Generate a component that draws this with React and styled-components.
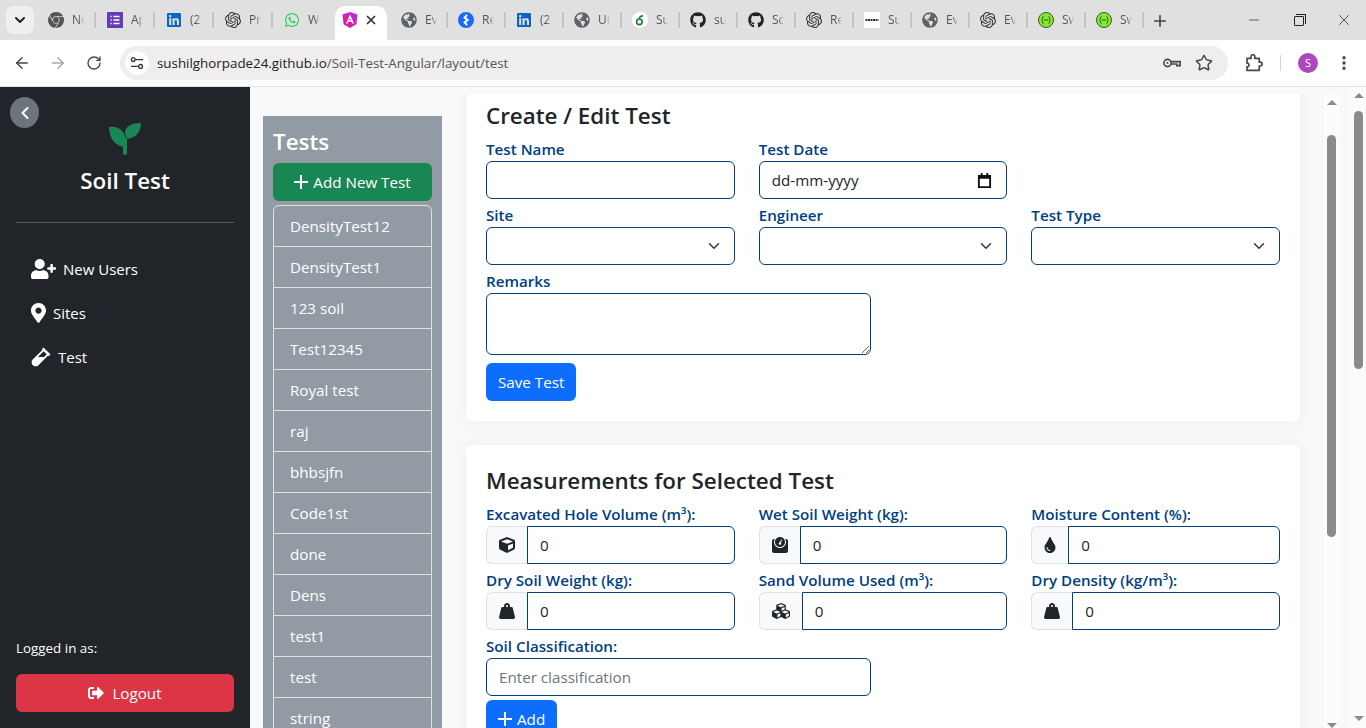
import React from 'react';
import styled, { createGlobalStyle } from 'styled-components';
import {
  FaCube, FaCubes, FaGithub, FaGlobeAmericas, FaLinkedin, FaMapMarkerAlt,
  FaSignOutAlt, FaTint, FaUserPlus, FaVial, FaWeight, FaWeightHanging, FaWhatsapp,
} from 'react-icons/fa';
import { SiOpenai, SiGooglechrome } from 'react-icons/si';
import { ArrowLeft, ArrowRight, RotateCw, Star, EllipsisVertical, ChevronDown, ChevronLeft, X, Plus, Minus } from 'lucide-react';

const font = '"Open Sans", "Noto Sans", sans-serif';
const label = '#004080';

const GlobalStyle = createGlobalStyle`
  html, body { margin: 0; height: 100%; overflow: hidden; }
  body { font-family: ${font}; font-size: 15.2px; line-height: 24px; color: #212529; background: #fff; }
  * { box-sizing: border-box; }
`;

const Browser = styled.div`
  display: flex;
  flex-direction: column;
  height: 728px;
  overflow: hidden;
`;

const TabStrip = styled.div`
  display: flex;
  align-items: flex-end;
  height: 40px;
  background: #e0e0e0;
  flex: none;
`;

const TabMenu = styled.div`
  width: 28px;
  height: 28px;
  margin: 0 4px 6px 6px;
  border-radius: 8px;
  background: #efefef;
  display: flex;
  align-items: center;
  justify-content: center;
  color: #222;
`;

const Tab = styled.div`
  width: ${(p) => p.$width || 58}px;
  height: 34px;
  padding: 0 0 6px ${(p) => p.$pad || 10}px;
  display: flex;
  align-items: center;
  gap: 8px;
  font-size: 12px;
  color: #555;
  position: relative;
  flex: none;
  &::after {
    content: '';
    display: ${(p) => (p.$noSep ? 'none' : 'block')};
    position: absolute;
    right: 0;
    top: 6px;
    width: 2px;
    height: 16px;
    background: #c4c4c4;
  }
`;

const TabName = styled.span`
  width: 12px;
  overflow: hidden;
  white-space: nowrap;
  -webkit-mask-image: linear-gradient(90deg, #000 55%, transparent);
  mask-image: linear-gradient(90deg, #000 55%, transparent);
`;

const ActiveTab = styled.div`
  width: 52px;
  height: 34px;
  background: #fff;
  border-radius: 10px 10px 0 0;
  display: flex;
  align-items: center;
  padding: 0 9px 6px 7px;
  justify-content: space-between;
  flex: none;
`;

const NewTab = styled.div`
  margin: 0 0 10px 7px;
  display: flex;
  color: #444;
`;

const WindowControls = styled.div`
  margin-left: auto;
  display: flex;
  align-self: stretch;
  align-items: center;
  color: #222;
`;

const WinButton = styled.div`
  width: 45px;
  display: flex;
  justify-content: center;
`;

const RestoreIcon = styled.div`
  width: 10px;
  height: 10px;
  border: 1px solid #222;
  border-radius: 1px;
  position: relative;
  margin-top: 2px;
  &::before {
    content: '';
    position: absolute;
    left: 1px;
    top: -3px;
    width: 9px;
    height: 9px;
    border-top: 1px solid #222;
    border-right: 1px solid #222;
  }
`;

const Toolbar = styled.div`
  height: 47px;
  flex: none;
  background: #fff;
  border-radius: 8px 8px 0 0;
  border-bottom: 1px solid #dfe3e3;
  display: flex;
  align-items: center;
  padding-left: 4px;
`;

const ToolIcon = styled.div`
  width: 36px;
  margin-left: ${(p) => p.$left || 0}px;
  display: flex;
  justify-content: center;
  color: ${(p) => (p.$dim ? '#a8a8a8' : '#474747')};
`;

const Omnibox = styled.div`
  flex: none;
  width: 1108px;
  height: 34px;
  margin-left: 8px;
  background: #efedee;
  border-radius: 17px;
  display: flex;
  align-items: center;
  padding: 0 15px 0 5px;
  font-size: 13.36px;
  color: #555;
`;

const TuneBadge = styled.div`
  width: 24px;
  height: 24px;
  border-radius: 50%;
  background: #fff;
  display: flex;
  align-items: center;
  justify-content: center;
  color: #333;
  margin-right: 8px;
`;

const Host = styled.span`
  color: #222;
`;

const OmniEnd = styled.div`
  margin-left: auto;
  display: flex;
  align-items: center;
  gap: 14px;
  color: #474747;
`;

const Separator = styled.div`
  width: 1px;
  height: 16px;
  background: #d5d5d5;
  margin: 0 8px;
`;

const Avatar = styled.div`
  width: 20px;
  height: 20px;
  border-radius: 50%;
  background: #ad47bc;
  color: #fff;
  font-size: 11px;
  display: flex;
  align-items: center;
  justify-content: center;
  margin: 0 8px 0 9px;
`;

const Page = styled.div`
  flex: 1;
  min-height: 0;
  display: flex;
  background: #f8f9fa;
`;

const Sidebar = styled.aside`
  width: 250px;
  flex: none;
  background: #212529;
  color: #fff;
  padding: 36px 16px 16px;
  display: flex;
  flex-direction: column;
  position: relative;
`;

const BackButton = styled.div`
  position: absolute;
  left: 10px;
  top: 10px;
  width: 29px;
  height: 31px;
  border-radius: 50%;
  background: #6c757d;
  display: flex;
  align-items: center;
  justify-content: center;
`;

const Brand = styled.div`
  display: flex;
  flex-direction: column;
  align-items: center;
  border-bottom: 1px solid #55595e;
  margin-bottom: 26px;
  height: 100px;
`;

const BrandName = styled.h1`
  margin: 11px 0 0;
  font-size: 22.4px;
  font-weight: 600;
  line-height: 29px;
  color: #fff;
`;

const NavList = styled.nav`
  display: flex;
  flex-direction: column;
  gap: 4px;
`;

const NavItem = styled.a`
  display: flex;
  align-items: center;
  gap: 7px;
  padding: 8px 15px;
  height: 40px;
  font-size: 15px;
  color: #fff;
  svg { flex: none; }
`;

const SidebarFoot = styled.div`
  margin-top: auto;
`;

const LoggedIn = styled.div`
  font-size: 13.4px;
  line-height: 21px;
  margin-bottom: 15px;
`;

const Button = styled.button`
  display: inline-flex;
  align-items: center;
  justify-content: center;
  gap: ${(p) => p.$gap || 5}px;
  height: 38px;
  border: 0;
  border-radius: 6px;
  padding: 0 12px;
  font: inherit;
  color: #fff;
  background: ${(p) => p.$bg || '#0d6efd'};
  width: ${(p) => p.$width || 'auto'};
  flex: none;
`;

const TestsColumn = styled.div`
  width: 204px;
  flex: none;
  padding: 29px 12px 0 13px;
`;

const TestsPanel = styled.div`
  height: 100%;
  background: #929aa3;
  padding: 10px 10px 0;
  overflow: hidden;
`;

const PanelTitle = styled.h2`
  margin: 0 0 6px;
  font-size: 22.4px;
  font-weight: 600;
  line-height: 31px;
  color: #fff;
`;

const TestList = styled.ul`
  list-style: none;
  margin: 4px 0 0;
  padding: 0;
  border: 1px solid #dee2e6;
  border-radius: 6px 6px 0 0;
`;

const TestItem = styled.li`
  height: 41px;
  padding: 8px 16px;
  color: #fff;
  & + & { border-top: 1px solid #dee2e6; }
  &:first-child { height: 40px; }
`;

const Scroller = styled.main`
  flex: 1;
  min-width: 0;
  margin-top: 7px;
  padding-left: 12px;
  overflow: hidden;
`;

const Cards = styled.div`
  margin-top: -14px;
  display: flex;
  flex-direction: column;
  gap: 24px;
  padding-right: 24px;
`;

const Card = styled.section`
  background: #fff;
  border-radius: 6px;
  padding: 20px;
  box-shadow: 0 0 16px rgba(0, 0, 0, 0.05);
`;

const CardTitle = styled.h3`
  margin: 0 0 6px;
  font-size: 22.4px;
  font-weight: 600;
  line-height: 31px;
  color: #212529;
`;

const Grid = styled.div`
  display: grid;
  grid-template-columns: repeat(3, 1fr);
  column-gap: 24px;
  row-gap: 4px;
`;

const Field = styled.div`
  grid-column: ${(p) => (p.$half ? '1 / -1' : 'auto')};
  width: ${(p) => (p.$half ? '385px' : 'auto')};
`;

const Label = styled.label`
  display: block;
  height: 24px;
  font-weight: 600;
  color: ${label};
  white-space: nowrap;
`;

const controlStyles = `
  display: block;
  width: 100%;
  height: 38px;
  border: 1px solid ${label};
  border-radius: 6px;
  padding: 6px 12px;
  background-color: #fff;
  font: inherit;
  color: #212529;
  outline: none;
`;

const TextInput = styled.input`
  ${controlStyles}
  &::placeholder { color: #6c757d; opacity: 1; }
`;

const DateBox = styled.div`
  ${controlStyles}
  display: flex;
  align-items: center;
  justify-content: space-between;
  padding-right: 14px;
`;

const Select = styled.select`
  ${controlStyles}
  appearance: none;
  background-image: url("data:image/svg+xml,%3csvg xmlns='http://www.w3.org/2000/svg' viewBox='0 0 16 16'%3e%3cpath fill='none' stroke='%23343a40' stroke-linecap='round' stroke-linejoin='round' stroke-width='2' d='m2 5 6 6 6-6'/%3e%3c/svg%3e");
  background-repeat: no-repeat;
  background-position: right 12px center;
  background-size: 16px 12px;
`;

const TextArea = styled.textarea`
  ${controlStyles}
  height: 62px;
  resize: vertical;
`;

const InputGroup = styled.div`
  display: flex;
  height: 38px;
`;

const Addon = styled.div`
  width: ${(p) => p.$width}px;
  flex: none;
  background: #f8f9fa;
  border: 1px solid #dee2e6;
  border-right: 0;
  border-radius: 6px 0 0 6px;
  display: flex;
  align-items: center;
  justify-content: center;
  color: #212529;
`;

const GroupInput = styled(TextInput)`
  flex: 1;
  min-width: 0;
  border-radius: 0 6px 6px 0;
`;

const Actions = styled.div`
  margin-top: ${(p) => p.$top}px;
`;

const Track = styled.div`
  width: 15px;
  flex: none;
  margin: ${(p) => p.$top}px ${(p) => p.$right}px ${(p) => p.$bottom}px 0;
  background: ${(p) => p.$bg};
  display: flex;
  flex-direction: column;
  align-items: center;
`;

const Arrow = styled.div`
  width: 0;
  height: 0;
  border-left: 5px solid transparent;
  border-right: 5px solid transparent;
  ${(p) => (p.$down ? 'border-top: 5px solid #8b8b8b;' : 'border-bottom: 5px solid #8b8b8b;')}
  margin: ${(p) => (p.$down ? 'auto 0 7px' : '6px 0 0')};
`;

const Thumb = styled.div`
  width: 9px;
  height: ${(p) => p.$height}px;
  margin-top: ${(p) => p.$top}px;
  border-radius: 5px;
  background: #8b8b8b;
`;

const FormsIcon = () => (
  <svg width="16" height="16" viewBox="0 0 16 16">
    <rect width="16" height="16" rx="1" fill="#673ab7" />
    <path d="M6.5 4.5h6M6.5 8h6M6.5 11.5h6M3.5 4.5h1.2M3.5 8h1.2M3.5 11.5h1.2" stroke="#fff" strokeWidth="1.4" />
  </svg>
);

const BlueIcon = () => (
  <svg width="16" height="16" viewBox="0 0 16 16">
    <circle cx="8" cy="8" r="8" fill="#1f6bf0" />
    <path d="M9 2.8 6.6 5.6 9.6 8 6.6 10.4 9 13.2" fill="none" stroke="#fff" strokeWidth="2" />
  </svg>
);

const SproutIcon = () => (
  <svg width="16" height="16" viewBox="0 0 16 16">
    <circle cx="8" cy="8" r="8" fill="#fff" />
    <circle cx="7.4" cy="9.8" r="2.8" fill="none" stroke="#1a7a3c" strokeWidth="1.6" />
    <path d="M7 6.8C7.6 4.8 9 4 11 3.8" fill="none" stroke="#1a7a3c" strokeWidth="1.6" />
  </svg>
);

const StripeIcon = () => (
  <svg width="16" height="16" viewBox="0 0 16 16">
    <rect width="16" height="16" fill="#fff" />
    <path d="M1.5 8h13" stroke="#333" strokeWidth="2" strokeDasharray="2 .5" />
  </svg>
);

const AngularIcon = () => (
  <svg width="16" height="16" viewBox="0 0 16 16">
    <defs>
      <linearGradient id="ng" x1="0" y1="1" x2="1" y2="0">
        <stop offset="0" stopColor="#f0108c" />
        <stop offset="1" stopColor="#b52ee0" />
      </linearGradient>
    </defs>
    <path d="M8 0 15.5 2.6 14.4 12.2 8 16 1.6 12.2 .5 2.6Z" fill="url(#ng)" />
    <path d="M8 2.6 12 11.6H10.3L9.5 9.8H6.5L5.7 11.6H4ZM7.1 8.3H8.9L8 6.2Z" fill="#fff" />
  </svg>
);

const SwaggerIcon = () => (
  <svg width="16" height="16" viewBox="0 0 16 16">
    <circle cx="8" cy="8" r="7.5" fill="#85ea2d" stroke="#3b5a2a" />
    <path d="M5.6 4.2C4 4.2 5 8 3.6 8 5 8 4 11.8 5.6 11.8M10.4 4.2C12 4.2 11 8 12.4 8 11 8 12 11.8 10.4 11.8M5.8 8h4.4" fill="none" stroke="#2c5a2a" strokeWidth="1" />
  </svg>
);

const TuneIcon = () => (
  <svg width="14" height="14" viewBox="0 0 14 14" fill="none" stroke="#333" strokeWidth="1.3">
    <circle cx="3.2" cy="3.6" r="1.9" />
    <path d="M5.6 3.6H13M1 10.4h7" />
    <circle cx="10.6" cy="10.4" r="1.9" />
  </svg>
);

const KeyIcon = () => (
  <svg width="18" height="10" viewBox="0 0 18 10" fill="none" stroke="#474747" strokeWidth="1.6">
    <circle cx="4.5" cy="5" r="3.6" />
    <circle cx="4.5" cy="5" r="1" fill="#474747" stroke="none" />
    <path d="M8 3.6h9.2v4h-3.4V6H8" />
  </svg>
);

const ExtensionIcon = () => (
  <svg width="18" height="18" viewBox="0 0 18 18" fill="none" stroke="#474747" strokeWidth="1.7" strokeLinejoin="round">
    <path d="M2 4.4h4V2.6a1.9 1.9 0 0 1 3.8 0v1.8h4.4v3.8h1a1.9 1.9 0 0 1 0 3.8h-1v4.4H2v-3.6c2.6.6 2.6-4.2 0-3.6Z" />
  </svg>
);

const SproutLogo = () => (
  <svg width="32" height="32" viewBox="0 0 32 32" fill="#198754">
    <path d="M0 4C9 3 18 7 17 24 8 24 0 17 0 4Z" />
    <path d="M32 0C23 0 16 3 16 10c0 2 1 4 3 6C27 14 32 9 32 0Z" />
    <rect x="14" y="14" width="4" height="18" rx="2" />
  </svg>
);

const PlusIcon = () => (
  <svg width="14" height="14" viewBox="0 0 14 14" stroke="currentColor" strokeWidth="2">
    <path d="M7 0v14M0 7h14" />
  </svg>
);

const green = { color: '#25d366' };
const blue = { color: '#0a66c2' };
const globe = <FaGlobeAmericas size={16} color="#5f6368" />;

const tabsBefore = [
  { icon: <SiGooglechrome size={16} color="#555" />, name: 'New Tab', pad: 10, width: 58 },
  { icon: <FormsIcon />, name: 'Apps', pad: 11, width: 59 },
  { icon: <FaLinkedin size={16} style={blue} />, name: '(27)', pad: 11, width: 59 },
  { icon: <SiOpenai size={16} color="#333" />, name: 'Pr', pad: 11, width: 59 },
  { icon: <FaWhatsapp size={16} style={green} />, name: 'Wh', pad: 11, width: 62, noSep: true },
];

const tabsAfter = [
  { icon: globe, name: 'Ev', pad: 14, width: 61 },
  { icon: <BlueIcon />, name: 'Re', width: 58 },
  { icon: <FaLinkedin size={16} style={blue} />, name: '(27)', width: 58 },
  { icon: globe, name: 'Ur', width: 58 },
  { icon: <SproutIcon />, name: 'Su', width: 58 },
  { icon: <FaGithub size={16} color="#222" />, name: 'su', width: 58 },
  { icon: <FaGithub size={16} color="#222" />, name: 'Sc', width: 58 },
  { icon: <SiOpenai size={16} color="#333" />, name: 'Re', width: 58 },
  { icon: <StripeIcon />, name: 'Su', width: 58 },
  { icon: globe, name: 'Ev', width: 58 },
  { icon: <SiOpenai size={16} color="#333" />, name: 'Ev', width: 58 },
  { icon: <SwaggerIcon />, name: 'Sw', width: 58 },
  { icon: <SwaggerIcon />, name: 'Sw', width: 58 },
];

const tests = ['DensityTest12', 'DensityTest1', '123 soil', 'Test12345', 'Royal test', 'raj', 'bhbsjfn', 'Code1st', 'done', 'Dens', 'test1', 'test', 'string'];

const measurements = [
  { label: 'Excavated Hole Volume (m³):', icon: <FaCube size={16} />, width: 41 },
  { label: 'Wet Soil Weight (kg):', icon: <FaWeight size={16} />, width: 41 },
  { label: 'Moisture Content (%):', icon: <FaTint size={16} />, width: 37 },
  { label: 'Dry Soil Weight (kg):', icon: <FaWeightHanging size={16} />, width: 41 },
  { label: 'Sand Volume Used (m³):', icon: <FaCubes size={18} />, width: 43 },
  { label: 'Dry Density (kg/m³):', icon: <FaWeightHanging size={16} />, width: 41 },
];

const TabEntry = ({ tab }) => (
  <Tab $width={tab.width} $pad={tab.pad} $noSep={tab.noSep}>
    {tab.icon}
    <TabName>{tab.name}</TabName>
  </Tab>
);

const App = () => {
  return (
    <Browser>
      <GlobalStyle />
      <TabStrip>
        <TabMenu><ChevronDown size={16} strokeWidth={3} /></TabMenu>
        {tabsBefore.map((tab, i) => <TabEntry key={i} tab={tab} />)}
        <ActiveTab>
          <AngularIcon />
          <X size={14} strokeWidth={3} color="#333" />
        </ActiveTab>
        {tabsAfter.map((tab, i) => <TabEntry key={i} tab={tab} />)}
        <NewTab><Plus size={18} strokeWidth={2.2} /></NewTab>
        <WindowControls>
          <WinButton><Minus size={16} strokeWidth={1} /></WinButton>
          <WinButton><RestoreIcon /></WinButton>
          <WinButton><X size={18} strokeWidth={1} /></WinButton>
        </WindowControls>
      </TabStrip>
      <Toolbar>
        <ToolIcon><ArrowLeft size={18} /></ToolIcon>
        <ToolIcon $dim><ArrowRight size={18} /></ToolIcon>
        <ToolIcon><RotateCw size={16} /></ToolIcon>
        <Omnibox>
          <TuneBadge><TuneIcon /></TuneBadge>
          <Host>sushilghorpade24.github.io</Host>/Soil-Test-Angular/layout/test
          <OmniEnd>
            <KeyIcon />
            <Star size={18} />
          </OmniEnd>
        </Omnibox>
        <ToolIcon $left={8}><ExtensionIcon /></ToolIcon>
        <Separator />
        <Avatar>S</Avatar>
        <ToolIcon><EllipsisVertical size={18} strokeWidth={2.5} /></ToolIcon>
      </Toolbar>
      <Page>
        <Sidebar>
          <BackButton><ChevronLeft size={20} strokeWidth={2.5} /></BackButton>
          <Brand>
            <SproutLogo />
            <BrandName>Soil Test</BrandName>
          </Brand>
          <NavList>
            <NavItem><FaUserPlus size={20} style={{ width: 25 }} />New Users</NavItem>
            <NavItem><FaMapMarkerAlt size={20} style={{ width: 15 }} />Sites</NavItem>
            <NavItem><FaVial size={20} />Test</NavItem>
          </NavList>
          <SidebarFoot>
            <LoggedIn>Logged in as:</LoggedIn>
            <Button $bg="#dc3545" $width="100%" $gap={8}><FaSignOutAlt size={16} />Logout</Button>
          </SidebarFoot>
        </Sidebar>
        <TestsColumn>
          <TestsPanel>
            <PanelTitle>Tests</PanelTitle>
            <Button $bg="#198754" $width="100%"><PlusIcon />Add New Test</Button>
            <TestList>
              {tests.map((name) => <TestItem key={name}>{name}</TestItem>)}
            </TestList>
          </TestsPanel>
        </TestsColumn>
        <Scroller>
          <Cards>
            <Card>
              <CardTitle>Create / Edit Test</CardTitle>
              <Grid>
                <Field><Label>Test Name</Label><TextInput /></Field>
                <Field>
                  <Label>Test Date</Label>
                  <DateBox>
                    dd-mm-yyyy
                    <svg width="15" height="15" viewBox="0 0 16 16">
                      <path fill="#111" d="M4 0h2v2h4V0h2v2h3v14H1V2h3zM3 6v8h10V6z" />
                    </svg>
                  </DateBox>
                </Field>
                <div />
                <Field><Label>Site</Label><Select /></Field>
                <Field><Label>Engineer</Label><Select /></Field>
                <Field><Label>Test Type</Label><Select /></Field>
                <Field $half><Label>Remarks</Label><TextArea /></Field>
              </Grid>
              <Actions $top={8}><Button>Save Test</Button></Actions>
            </Card>
            <Card>
              <CardTitle>Measurements for Selected Test</CardTitle>
              <Grid>
                {measurements.map((m) => (
                  <Field key={m.label}>
                    <Label>{m.label}</Label>
                    <InputGroup>
                      <Addon $width={m.width}>{m.icon}</Addon>
                      <GroupInput defaultValue="0" />
                    </InputGroup>
                  </Field>
                ))}
                <Field $half>
                  <Label>Soil Classification:</Label>
                  <TextInput placeholder="Enter classification" />
                </Field>
              </Grid>
              <Actions $top={4}><Button><PlusIcon />Add</Button></Actions>
            </Card>
          </Cards>
        </Scroller>
        <Track $top={7} $right={12} $bottom={-7} $bg="#fcfcfd">
          <Arrow />
          <Thumb $top={30} $height={402} />
          <Arrow $down />
        </Track>
        <Track $top={0} $right={0} $bottom={0} $bg="#fbfbfb">
          <Arrow />
          <Thumb $top={13} $height={258} />
          <Arrow $down />
        </Track>
      </Page>
    </Browser>
  );
};

export default App;
